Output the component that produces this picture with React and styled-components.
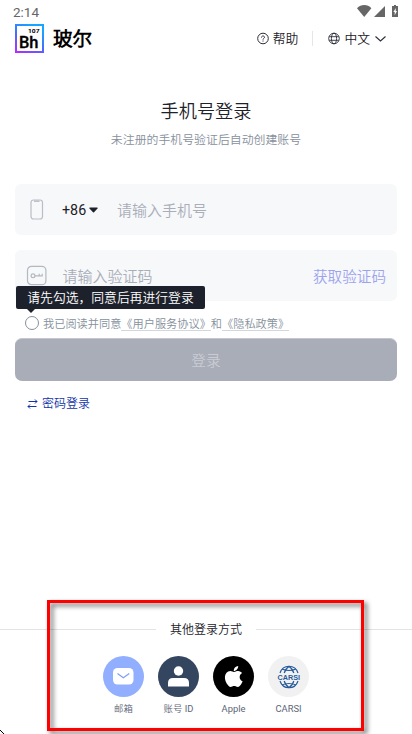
import styled, {createGlobalStyle} from "styled-components";

const GlobalStyle = createGlobalStyle`
  * {
    box-sizing: border-box;
  }

  body {
    margin: 0;
    background: #ffffff;
    color: #1d2129;
    font-family: Roboto, "Noto Sans CJK SC DemiLight", "Noto Sans CJK SC", sans-serif;
  }

  svg {
    display: block;
    flex-shrink: 0;
    overflow: visible;
  }
`

const Page = styled.div`
  position: relative;
  display: flex;
  flex-direction: column;
  width: 412px;
  height: 734px;
  overflow: hidden;
`

const StatusBar = styled.div`
  display: flex;
  justify-content: space-between;
  height: 24px;
  padding: 4px 13px 0;
  color: #666666;
  font-size: 13.5px;
  line-height: 16px;
`

const Header = styled.header`
  display: flex;
  align-items: center;
  height: 29px;
  padding: 0 24px 0 15px;
`

const Brand = styled.span`
  margin: 0 auto 0 9px;
  padding-top: 2px;
  color: #000000;
  font-size: 19.6px;
  font-weight: 700;
  line-height: 29px;
`

const HeaderLink = styled.div`
  display: flex;
  align-items: center;
  gap: 4px;
  padding-top: 1px;
  font-size: 12.8px;
  line-height: 20px;
`

const HeaderDivider = styled.div`
  width: 1px;
  height: 15px;
  margin: 0 15px 0 14px;
  background: #e5e6eb;
`

const Title = styled.h1`
  margin: 46px 0 0;
  font-size: 18.2px;
  font-weight: 400;
  line-height: 26px;
  text-align: center;
`

const Subtitle = styled.p`
  margin: 6px 0 0;
  color: #86909c;
  font-size: 11.9px;
  line-height: 18px;
  text-align: center;
`

const Form = styled.form`
  display: flex;
  flex-direction: column;
  padding: 35px 15px 0;
`

const Field = styled.div`
  display: flex;
  align-items: center;
  height: 51px;
  margin-bottom: 15px;
  padding: 0 11px 0 ${({indent}) => indent}px;
  background: #f7f8fa;
  border-radius: 6px;
`

const AreaCode = styled.div`
  display: flex;
  align-items: center;
  gap: 3px;
  width: 55px;
  margin-left: 18px;
  font-size: 14.3px;
`

const Placeholder = styled.span`
  margin-left: ${({gap}) => gap || 0}px;
  padding-top: 2px;
  color: #a9aeb8;
  font-size: 15px;
  line-height: 22px;
`

const SendCode = styled.span`
  margin-left: auto;
  padding-top: 2px;
  color: #9ca3ee;
  font-size: 14.6px;
  line-height: 22px;
`

const Agreement = styled.div`
  position: relative;
  display: flex;
  align-items: center;
  gap: 4px;
  height: 18px;
  margin: -2px 0 6px;
  padding-left: 10px;
  color: #86909c;
  font-size: 11.2px;
  line-height: 18px;
  white-space: nowrap;
`

const Radio = styled.span`
  width: 14px;
  height: 14px;
  border: 1.3px solid #86909c;
  border-radius: 50%;
`

const AgreementText = styled.span`
  padding-top: 4px;
`

const Policy = styled.span`
  display: inline-block;
  height: 15px;
  line-height: 18px;
  vertical-align: top;
  border-bottom: 1px solid #d3d6dc;
`

const Tooltip = styled.div`
  position: absolute;
  left: 1px;
  bottom: 23px;
  width: 189px;
  height: 23px;
  background: #1d212b;
  border-radius: 2px;
  color: #ffffff;
  font-size: 12.8px;
  line-height: 24px;
  text-align: center;

  &::after {
    content: "";
    position: absolute;
    left: 11px;
    top: 100%;
    border: 4px solid transparent;
    border-top-color: #1d212b;
    border-bottom: 0;
  }
`

const SubmitButton = styled.button`
  height: 43px;
  padding: 2px 0 0;
  background: #a9adb8;
  border: 0;
  border-top: 1px solid #c3c6ce;
  border-radius: 7px;
  color: #c9ccd4;
  font-family: inherit;
  font-size: 14.7px;
  line-height: 40px;
`

const PasswordLink = styled.div`
  display: flex;
  align-items: center;
  gap: 4px;
  margin: 14px 0 0 12px;
  color: #1433a6;
  font-size: 12px;
  line-height: 18px;
`

const Footer = styled.footer`
  margin-top: auto;
  height: 114px;
`

const FooterTitle = styled.div`
  display: flex;
  align-items: center;
  gap: 14px;
  height: 19px;
  font-size: 12px;
  line-height: 19px;

  span {
    padding-top: 2px;
  }

  &::before,
  &::after {
    content: "";
    flex: 1;
    height: 1px;
    background: #e2e3e6;
  }
`

const Methods = styled.div`
  display: flex;
  justify-content: center;
  gap: 14px;
  margin-top: 17px;
`

const Method = styled.div`
  display: flex;
  flex-direction: column;
  align-items: center;
  width: 41px;
  color: #5c6576;
  font-size: 9.4px;
  line-height: 14px;
  white-space: nowrap;
`

const MethodIcon = styled.div`
  display: flex;
  align-items: center;
  justify-content: center;
  width: 41px;
  height: 41px;
  margin-bottom: 5px;
  background: ${({color}) => color};
  border-radius: 50%;
`

const Highlight = styled.div`
  position: absolute;
  left: 47px;
  top: 600px;
  width: 317px;
  height: 131px;
  border: 3px solid #ff0000;
  filter: drop-shadow(3px 3px 2.5px rgba(0, 0, 0, 0.6));
`

const Pointer = styled.div`
  position: absolute;
  left: 0;
  bottom: 0;
`

const StatusIcons = () => <svg width="42" height="14" viewBox="0 0 42 14" fill="#666666">
  <path d="M0 4.2C4-.1 10.600-.1 14.400 4.200L7.200 13z" />
  <path d="M28 2v11H17z" />
  <path d="M37 1h2v1h2v11h-6V2h2z" />
  <path d="M38.800 4l-2.400 4h1.300v3.200L40 7h-1.300z" fill="#ffffff" />
</svg>

const Logo = () => <svg width="29" height="29" viewBox="0 0 29 29">
  <defs>
    <linearGradient id="frame" x1="0" y1="1" x2=".55" y2="0">
      <stop offset="0" stopColor="#b52cff" />
      <stop offset=".5" stopColor="#4c68ff" />
      <stop offset="1" stopColor="#16a5ff" />
    </linearGradient>
  </defs>
  <rect x="1" y="1" width="27" height="27" fill="#ffffff" stroke="url(#frame)" strokeWidth="2" />
  <text x="13" y="9" fontSize="6" fontWeight="700" textLength="11.500" lengthAdjust="spacingAndGlyphs">107</text>
  <text x="4" y="24" fontSize="16" fontWeight="500" stroke="#000000" strokeWidth=".3" textLength="19.500" lengthAdjust="spacingAndGlyphs">Bh</text>
</svg>

const HelpIcon = () => <svg width="12" height="12" viewBox="0 0 12 12" fill="none" stroke="#2a2e37">
  <circle cx="6" cy="5.500" r="5.300" />
  <path d="M4.500 4.500c0-2 3-2 3-.2C7.500 5.400 6 5.300 6 6.600M6 7.500v1" />
</svg>

const GlobeIcon = () => <svg width="12" height="12" viewBox="0 0 12 12" fill="none" stroke="#2a2e37" strokeWidth=".9">
  <circle cx="6" cy="5.500" r="5.300" />
  <ellipse cx="6" cy="5.500" rx="2.600" ry="5.300" />
  <path d="M1.200 3.700h9.600M1.200 7.300h9.600" />
</svg>

const PhoneIcon = () => <svg width="14" height="21" viewBox="0 0 14 21" fill="none" stroke="#b9bdc5" strokeWidth="1.200">
  <rect x="1" y="1" width="11.500" height="19" rx="2.500" />
  <path d="M4 2.200h5.500" strokeWidth="1.500" />
</svg>

const KeyIcon = () => <svg width="20" height="20" viewBox="0 0 20 20" fill="none" stroke="#b4b8c0" strokeWidth="1.200">
  <rect x=".5" y=".3" width="18.400" height="18.400" rx="4" />
  <circle cx="6" cy="9.800" r="1.900" />
  <path d="M7.900 9.800h7.300V7.800M12.200 9.800V7.800" />
</svg>

const MailIcon = () => <svg width="21" height="17" viewBox="0 0 21 17">
  <rect width="20.500" height="16.500" rx="4.500" fill="#ffffff" />
  <path d="M4.500 5.500l5.800 4.200 6-4.200" fill="none" stroke="#7f9df5" strokeWidth="1.200" />
</svg>

const UserIcon = () => <svg width="21" height="21" viewBox="0 0 21 21" fill="#ffffff">
  <circle cx="10.500" cy="5" r="4.700" />
  <path d="M0 20.500v-3.500q0-5 5-5h11q5 0 5 5v3.500z" />
</svg>

const AppleIcon = () => <svg width="28" height="28" viewBox=".2 .500 24 24" fill="#ffffff">
  <path d="M17.050 20.280c-.98.950-2.050.800-3.080.350-1.090-.460-2.090-.480-3.240 0-1.440.620-2.200.440-3.060-.350C2.790 15.250 3.510 7.590 9.050 7.310c1.350.070 2.290.740 3.080.800 1.180-.240 2.310-.930 3.570-.840 1.510.120 2.650.720 3.400 1.800-3.120 1.870-2.380 5.980.480 7.130-.570 1.500-1.310 2.990-2.540 4.090zM12.030 7.250c-.150-2.230 1.660-4.070 3.740-4.250.290 2.580-2.340 4.500-3.740 4.250z" />
</svg>

const CarsiIcon = () => <svg width="26" height="24" viewBox="-1 0 26 24" fill="none" stroke="#285a99" strokeWidth="1.200">
  <path d="M3 8C6-1 18-1 21 8M3 16C6 25 18 25 21 16" />
  <path d="M7.200 8Q8.500 3.500 12 1.500Q15.500 3.500 16.800 8M7.200 16Q8.500 20.500 12 22.500Q15.500 20.500 16.800 16" />
  <path d="M5 4Q12 7 19 4M5 20Q12 17 19 20" />
  <text x=".5" y="14.800" fill="#285a99" stroke="none" fontFamily="Liberation Sans" fontSize="7.500" fontWeight="700" textLength="22.500" lengthAdjust="spacingAndGlyphs">CARSI</text>
</svg>

const methods = [
  {name: "邮箱", color: "#91aeff", icon: <MailIcon />},
  {name: "账号 ID", color: "#34455f", icon: <UserIcon />},
  {name: "Apple", color: "#000000", icon: <AppleIcon />},
  {name: "CARSI", color: "#f1f1f2", icon: <CarsiIcon />},
]

export default function App() {
  return <>
    <GlobalStyle />
    <Page>
      <StatusBar>
        <span>2:14</span>
        <StatusIcons />
      </StatusBar>

      <Header>
        <Logo />
        <Brand>玻尔</Brand>
        <HeaderLink><HelpIcon />帮助</HeaderLink>
        <HeaderDivider />
        <HeaderLink>
          <GlobeIcon />中文
          <svg width="14" height="8" viewBox="0 0 14 8" fill="none" stroke="#2a2e37" strokeWidth="1.100">
            <path d="M1.500 1.500l5 4.500 5-4.500" />
          </svg>
        </HeaderLink>
      </Header>

      <Title>手机号登录</Title>
      <Subtitle>未注册的手机号验证后自动创建账号</Subtitle>

      <Form>
        <Field indent={15}>
          <PhoneIcon />
          <AreaCode>
            +86
            <svg width="9" height="6" viewBox="0 0 9 6" fill="#1d2129">
              <path d="M1 .5h7q1 0 .5 1L5 5.300q-.5.500-1 0L.5 1.500q-.5-1 .5-1z" />
            </svg>
          </AreaCode>
          <Placeholder>请输入手机号</Placeholder>
        </Field>
        <Field indent={12}>
          <KeyIcon />
          <Placeholder gap={15.5}>请输入验证码</Placeholder>
          <SendCode>获取验证码</SendCode>
        </Field>

        <Agreement>
          <Tooltip>请先勾选，同意后再进行登录</Tooltip>
          <Radio />
          <AgreementText>我已阅读并同意<Policy>《用户服务协议》</Policy>和<Policy>《隐私政策》</Policy></AgreementText>
        </Agreement>

        <SubmitButton type="button">登录</SubmitButton>

        <PasswordLink>
          <svg width="11" height="10" viewBox="0 0 11 10" fill="none" stroke="#1433a6">
            <path d="M1.500 2.500H10M8 .5l2 2-2 2M9.500 7.500H1M3 5.500l-2 2 2 2" />
          </svg>
          密码登录
        </PasswordLink>
      </Form>

      <Footer>
        <FooterTitle><span>其他登录方式</span></FooterTitle>
        <Methods>
          {methods.map(({name, color, icon}) => <Method key={name}>
            <MethodIcon color={color}>{icon}</MethodIcon>
            {name}
          </Method>)}
        </Methods>
      </Footer>

      <Highlight />
      <Pointer>
        <svg width="4" height="4" viewBox="0 0 4 4">
          <path d="M0 0h1v1h1v1h1v1h1v1H3V3H2V2H1V1H0z" fill="#000000" />
        </svg>
      </Pointer>
    </Page>
  </>
}
